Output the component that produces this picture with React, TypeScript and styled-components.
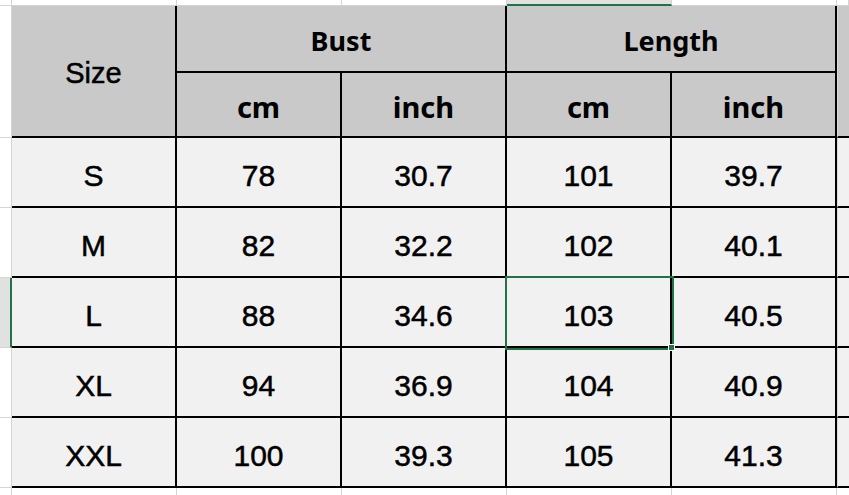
import * as React from 'react';
import styled, { createGlobalStyle } from 'styled-components';

const GlobalStyle = createGlobalStyle`
  html, body {
    margin: 0;
    padding: 0;
    background: #ffffff;
  }
`

const LINE = '2px solid #000000'
const GRID = '1px solid #d4d4d4'
const GREEN = '#217346'

const Sheet = styled.div`
  display: grid;
  grid-template-columns: 12px repeat(5, 165px) 1fr;
  grid-template-rows: 6px 67px 65px repeat(5, 70px) 1fr;
  width: 849px;
  height: 495px;
  overflow: hidden;
  background: #ffffff;
`
const ColStrip = styled.div<{ $active?: boolean }>`
  border-right: ${GRID};
  border-bottom: ${p => (p.$active ? `2px solid ${GREEN}` : GRID)};
  background: ${p => (p.$active ? '#e1e1e1' : '#ffffff')};
`
const Gutter = styled.div<{ $span?: number; $active?: boolean }>`
  grid-row: span ${p => p.$span || 1};
  border-bottom: ${GRID};
  border-right: ${p => (p.$active ? `2px solid ${GREEN}` : GRID)};
  background: ${p => (p.$active ? '#e1e1e1' : '#ffffff')};
`
const HeadCell = styled.div<{ $rows?: number; $cols?: number; $bold?: boolean; $size?: number }>`
  grid-row: span ${p => p.$rows || 1};
  grid-column: span ${p => p.$cols || 1};
  display: flex;
  align-items: center;
  justify-content: center;
  padding-top: 4px;
  background: #c9c9c9;
  border-right: ${LINE};
  border-bottom: ${LINE};
  color: #000000;
  font-family: ${p => (p.$bold ? '"Noto Sans", "Open Sans", sans-serif' : '"Liberation Sans", Arial, sans-serif')};
  font-weight: ${p => (p.$bold ? 700 : 400)};
  font-size: ${p => p.$size || 29}px;
  -webkit-text-stroke: ${p => (p.$bold ? '0' : '0.5px #000')};
`
const Cell = styled.div<{ $picked?: boolean }>`
  position: relative;
  display: flex;
  align-items: center;
  justify-content: center;
  padding-top: 7px;
  background: #f1f1f1;
  border-right: ${LINE};
  border-bottom: ${LINE};
  color: #000000;
  font-family: "Liberation Sans", Arial, sans-serif;
  font-size: 30px;
  -webkit-text-stroke: 0.5px #000;
  ${p => p.$picked && `
    outline: 2px solid ${GREEN};
    outline-offset: 0px;
    z-index: 1;
  `}
`
const Handle = styled.span`
  position: absolute;
  right: -5px;
  bottom: -5px;
  width: 5px;
  height: 5px;
  background: ${GREEN};
  border: 1px solid #ffffff;
`
const EdgeHead = styled.div`
  grid-row: span 2;
  background: #c9c9c9;
  border-left: 1px solid #dadada;
  border-bottom: ${LINE};
`
const Edge = styled.div`
  background: #f1f1f1;
  border-left: 1px solid #dadada;
  border-bottom: ${LINE};
`
const Foot = styled.div<{ $edge?: boolean }>`
  border-right: ${p => (p.$edge ? 'none' : GRID)};
`

const rows = [
  ['S', '78', '30.7', '101', '39.7'],
  ['M', '82', '32.2', '102', '40.1'],
  ['L', '88', '34.6', '103', '40.5'],
  ['XL', '94', '36.9', '104', '40.9'],
  ['XXL', '100', '39.3', '105', '41.3'],
]

const App = () => {
  return (
    <>
      <GlobalStyle />
      <Sheet>
        <ColStrip />
        <ColStrip />
        <ColStrip />
        <ColStrip />
        <ColStrip $active />
        <ColStrip />
        <ColStrip />

        <Gutter $span={2} />
        <HeadCell $rows={2}>Size</HeadCell>
        <HeadCell $cols={2} $bold $size={27}>Bust</HeadCell>
        <HeadCell $cols={2} $bold $size={27}>Length</HeadCell>
        <EdgeHead />
        <HeadCell $bold $size={29}>cm</HeadCell>
        <HeadCell $bold $size={29}>inch</HeadCell>
        <HeadCell $bold $size={29}>cm</HeadCell>
        <HeadCell $bold $size={29}>inch</HeadCell>

        {rows.map((r, i) => (
          <React.Fragment key={r[0]}>
            <Gutter $active={i === 2} />
            {r.map((v, j) => (
              <Cell key={j} $picked={i === 2 && j === 3}>
                {v}
                {i === 2 && j === 3 && <Handle />}
              </Cell>
            ))}
            <Edge />
          </React.Fragment>
        ))}

        <Foot />
        <Foot />
        <Foot />
        <Foot />
        <Foot />
        <Foot />
        <Foot $edge />
      </Sheet>
    </>
  )
}
export default App
